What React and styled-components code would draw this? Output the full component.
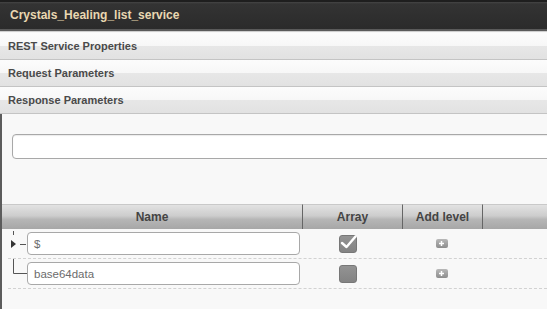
import React from 'react';
import styled, { createGlobalStyle } from 'styled-components';

const GlobalStyle = createGlobalStyle`
    html, body {
        margin: 0;
        padding: 0;
        background: #f8f8f8;
    }
    body {
        font-family: "Liberation Sans", Arial, sans-serif;
    }
`;

const Pagina = styled.div`
    width: 547px;
    height: 309px;
    overflow: hidden;
    display: flex;
    flex-direction: column;
    background: #f8f8f8;
`;

const BarraTitulo = styled.header`
    height: 29px;
    flex-shrink: 0;
    display: flex;
    align-items: center;
    padding-left: 10px;
    background: linear-gradient(#1e1e1e 0, #1e1e1e 2px, #454545 2px, #333 4px, #2b2b2b 100%);
    border-bottom: 2px solid #5a5a5a;
    box-shadow: 0 1px 0 #cfcfcf;
    color: #e9d7b1;
    font-size: 12px;
    font-weight: bold;
    margin-bottom: 2px;
`;

const Secao = styled.div`
    height: 26px;
    flex-shrink: 0;
    display: flex;
    align-items: center;
    padding-left: 8px;
    background: linear-gradient(#fcfcfc 0%, #f7f7f7 50%, #e7e7e7 50%, #e2e2e2 100%);
    border-bottom: 1px solid #c4c4c4;
    color: #4a4a4a;
    font-size: 11px;
    font-weight: bold;
`;

const Painel = styled.div`
    flex: 1;
    border-left: 2px solid #5c5c5c;
    background: #f8f8f8;
    padding-top: 20px;
    display: flex;
    flex-direction: column;
`;

const CampoBusca = styled.div`
    margin-left: 10px;
    width: 560px;
    height: 23px;
    background: #fff;
    border: 1px solid #a8a8a8;
    border-radius: 4px;
    box-shadow: inset 0 1px 1px rgba(0, 0, 0, 0.08);
`;

const Tabela = styled.div`
    margin-top: 45px;
    display: grid;
    grid-template-columns: 300px 100px 80px 1fr;
`;

const Cabecalho = styled.div`
    height: 24px;
    display: flex;
    align-items: center;
    justify-content: center;
    background: linear-gradient(#e2e2e2 0%, #cdcdcd 45%, #b6b6b6 60%, #a7a7a7 100%);
    border-top: 1px solid #c9c9c9;
    border-left: ${p => (p.primeira ? 'none' : '1px solid #666')};
    color: #444;
    font-size: 12px;
    font-weight: bold;
`;

const Linha = styled.div`
    grid-column: 1 / -1;
    display: grid;
    grid-template-columns: 294px 100px 80px 1fr;
    height: 29px;
    margin-left: 6px;
    border-bottom: 1px dashed #d2d2d2;
`;

const CelulaNome = styled.div`
    position: relative;
    display: flex;
    align-items: center;
    padding-left: 19px;
`;

const CampoNome = styled.div`
    width: 273px;
    height: 23px;
    box-sizing: border-box;
    background: #fff;
    border: 1px solid #a8a8a8;
    border-radius: 4px;
    display: flex;
    align-items: center;
    padding-left: 6px;
    color: #6c6c6c;
    font-size: 11.5px;
`;

const Arvore = styled.svg`
    position: absolute;
    left: 0;
    top: 0;
`;

const CelulaCentro = styled.div`
    display: flex;
    align-items: center;
    justify-content: center;
    margin-left: ${p => p.desloca || 0}px;
`;

const Caixa = styled.div`
    width: 18px;
    height: 18px;
    box-sizing: border-box;
    border-radius: 3px;
    background: linear-gradient(#939393, #838383);
    border: 1px solid #777;
    display: flex;
    align-items: center;
    justify-content: center;
`;

const BotaoMais = styled.div`
    width: 12px;
    height: 9px;
    border-radius: 2px;
    background: linear-gradient(#b8b8b8, #8d8d8d);
    display: flex;
    align-items: center;
    justify-content: center;
`;

function Marca() {
    return (
        <svg width="17" height="15" viewBox="0 0 17 15" style={{ marginTop: -2, marginRight: -2 }}>
            <path d="M2 8 L6.5 12 L15.5 1.5" stroke="#fff" strokeWidth="2.4" fill="none" strokeLinecap="round" strokeLinejoin="round" />
        </svg>
    );
}

function Mais() {
    return (
        <svg width="7" height="7" viewBox="0 0 7 7">
            <path d="M3.5 1 V6 M1 3.5 H6" stroke="#fff" strokeWidth="1.5" />
        </svg>
    );
}

function Linhas({ tipo }) {
    if (tipo === 'raiz') {
        return (
            <Arvore width="20" height="29">
                <path d="M5.5 -4 V8" stroke="#555" strokeWidth="1" strokeDasharray="4 2" />
                <path d="M3 11 L8 15 L3 19 Z" fill="#333" />
                <path d="M12 15.5 H18" stroke="#555" strokeWidth="1" />
            </Arvore>
        );
    }
    return (
        <Arvore width="20" height="29">
            <path d="M5.5 0 V14.5 H19" stroke="#555" strokeWidth="1" fill="none" />
        </Arvore>
    );
}

const linhas = [
    { nome: '$', marcado: true, tipo: 'raiz' },
    { nome: 'base64data', marcado: false, tipo: 'filho' },
];

export default function App() {
    return (
        <Pagina>
            <GlobalStyle />
            <BarraTitulo>Crystals_Healing_list_service</BarraTitulo>
            <Secao>REST Service Properties</Secao>
            <Secao>Request Parameters</Secao>
            <Secao>Response Parameters</Secao>
            <Painel>
                <CampoBusca />
                <Tabela>
                    <Cabecalho primeira>Name</Cabecalho>
                    <Cabecalho>Array</Cabecalho>
                    <Cabecalho>Add level</Cabecalho>
                    <Cabecalho />
                    {linhas.map(l => (
                        <Linha key={l.nome}>
                            <CelulaNome>
                                <Linhas tipo={l.tipo} />
                                <CampoNome>{l.nome}</CampoNome>
                            </CelulaNome>
                            <CelulaCentro desloca={-9}>
                                <Caixa>{l.marcado && <Marca />}</Caixa>
                            </CelulaCentro>
                            <CelulaCentro desloca={-1}>
                                <BotaoMais><Mais /></BotaoMais>
                            </CelulaCentro>
                            <div />
                        </Linha>
                    ))}
                </Tabela>
            </Painel>
        </Pagina>
    );
}
